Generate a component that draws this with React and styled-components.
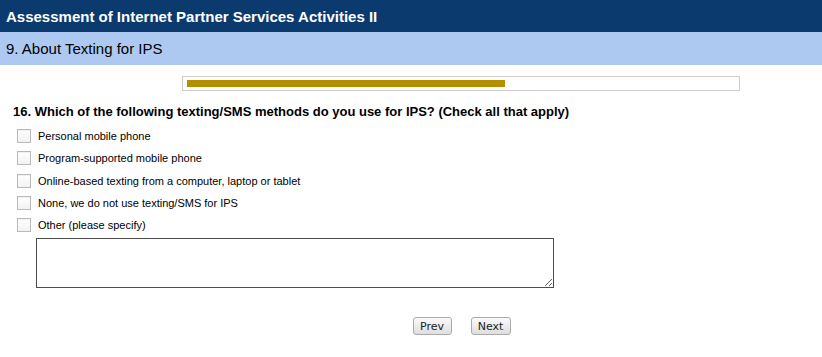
import React from "react";
import styled, { createGlobalStyle } from "styled-components";

const GlobalStyle = createGlobalStyle`
  body {
    margin: 0;
    background: #ffffff;
    font-family: "Liberation Sans", Arial, sans-serif;
    color: #000;
  }
`;

const Page = styled.div`
  width: 822px;
  min-height: 357px;
  display: flex;
  flex-direction: column;
`;

const TitleBar = styled.div`
  height: 32px;
  background: #0b3a6e;
  color: #fff;
  font-weight: bold;
  font-size: 15px;
  display: flex;
  align-items: center;
  padding-left: 6px;
`;

const SectionBar = styled.div`
  height: 33px;
  background: #adc9f1;
  font-size: 15px;
  display: flex;
  align-items: center;
  padding-left: 6px;
`;

const Progress = styled.div`
  margin: 11px 0 0 182px;
  width: 548px;
  height: 7px;
  border: 1px solid #cccccc;
  padding: 3px 4px;
  box-sizing: content-box;
  display: flex;
`;

const ProgressFill = styled.div`
  height: 100%;
  background: #b38f02;
`;

const Question = styled.div`
  margin: 13px 0 0 13px;
  font-size: 13px;
  font-weight: bold;
`;

const Options = styled.div`
  display: flex;
  flex-direction: column;
  gap: 8.3px;
  margin: 10px 0 0 17px;
`;

const Option = styled.label`
  display: flex;
  align-items: center;
  gap: 7px;
  font-size: 11px;
  height: 14px;
`;

const Box = styled.span`
  width: 12px;
  height: 12px;
  border: 1px solid #b9b9b9;
  background: linear-gradient(#ffffff, #f2f2f2);
  box-shadow: inset 0 1px 1px rgba(0, 0, 0, 0.06);
`;

const OtherText = styled.textarea`
  margin: 6px 0 0 36px;
  width: 518px;
  height: 50px;
  box-sizing: border-box;
  border: 1px solid #4d4d4d;
  resize: both;
  font-family: inherit;
`;

const Nav = styled.div`
  display: flex;
  justify-content: center;
  gap: 19px;
  margin: 29px 0 0 101px;
`;

const NavButton = styled.button`
  height: 18px;
  width: ${(p) => p.width}px;
  padding: 0;
  border: 1px solid #ababab;
  border-radius: 3px;
  background: linear-gradient(#fafafa, #dedede);
  font-family: "DejaVu Sans", sans-serif;
  font-size: 11px;
  color: #222;
`;

const options = [
  "Personal mobile phone",
  "Program-supported mobile phone",
  "Online-based texting from a computer, laptop or tablet",
  "None, we do not use texting/SMS for IPS",
  "Other (please specify)",
];

export default function App() {
  return (
    <Page>
      <GlobalStyle />
      <TitleBar>Assessment of Internet Partner Services Activities II</TitleBar>
      <SectionBar>9. About Texting for IPS</SectionBar>
      <Progress>
        <ProgressFill style={{ width: "318px" }} />
      </Progress>
      <Question>
        16. Which of the following texting/SMS methods do you use for IPS? (Check all that apply)
      </Question>
      <Options>
        {options.map((o) => (
          <Option key={o}>
            <Box />
            {o}
          </Option>
        ))}
      </Options>
      <OtherText />
      <Nav>
        <NavButton width={39}>Prev</NavButton>
        <NavButton width={40}>Next</NavButton>
      </Nav>
    </Page>
  );
}
